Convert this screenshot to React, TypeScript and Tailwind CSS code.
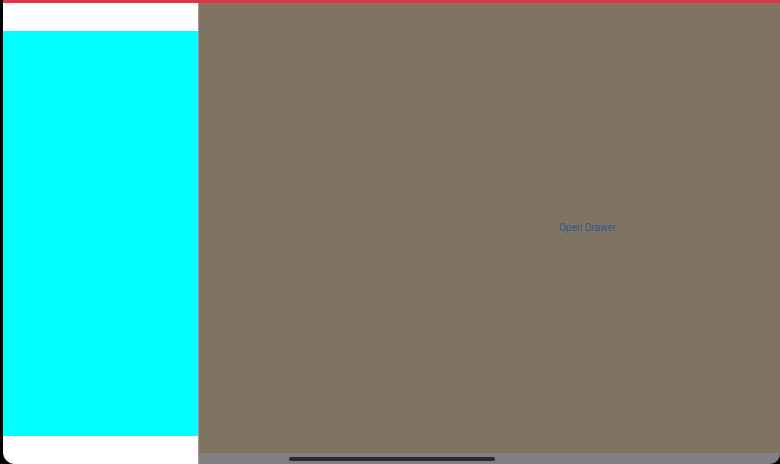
export default function App() {
  return (
    <div className="w-[780px] h-[464px] bg-black flex" style={{ fontFamily: "Roboto, 'Noto Sans', sans-serif" }}>
      <div className="ml-[3px] flex-1 flex flex-col rounded-bl-[12px] rounded-br-[10px] overflow-hidden">
        {/* status strip */}
        <div className="h-[3px] bg-[#e13447] shrink-0" />

        <div className="flex-1 flex min-h-0">
          {/* drawer */}
          <aside className="w-[195px] shrink-0 flex flex-col bg-white">
            <div className="h-[28px] shrink-0" />
            <div className="flex-1 bg-[#00ffff]" />
            <div className="h-[28px] shrink-0" />
          </aside>
          <div className="w-px shrink-0 bg-[#a39d94]" />

          {/* main content, dimmed while the drawer is open */}
          <main className="flex-1 min-w-0 flex flex-col overflow-hidden">
            <div className="flex-1 bg-[#7f7362] overflow-hidden">
              <div className="w-[777px] h-full flex items-center justify-center">
                <button className="text-[10px] text-[#2d5b92] leading-none">Open Drawer</button>
              </div>
            </div>
            <div className="h-[11px] shrink-0 bg-[#808080] flex items-center">
              <div className="ml-[90px] w-[206px] h-[4px] rounded-full bg-[#2b2b2b]" />
            </div>
          </main>
        </div>
      </div>
    </div>
  );
}
